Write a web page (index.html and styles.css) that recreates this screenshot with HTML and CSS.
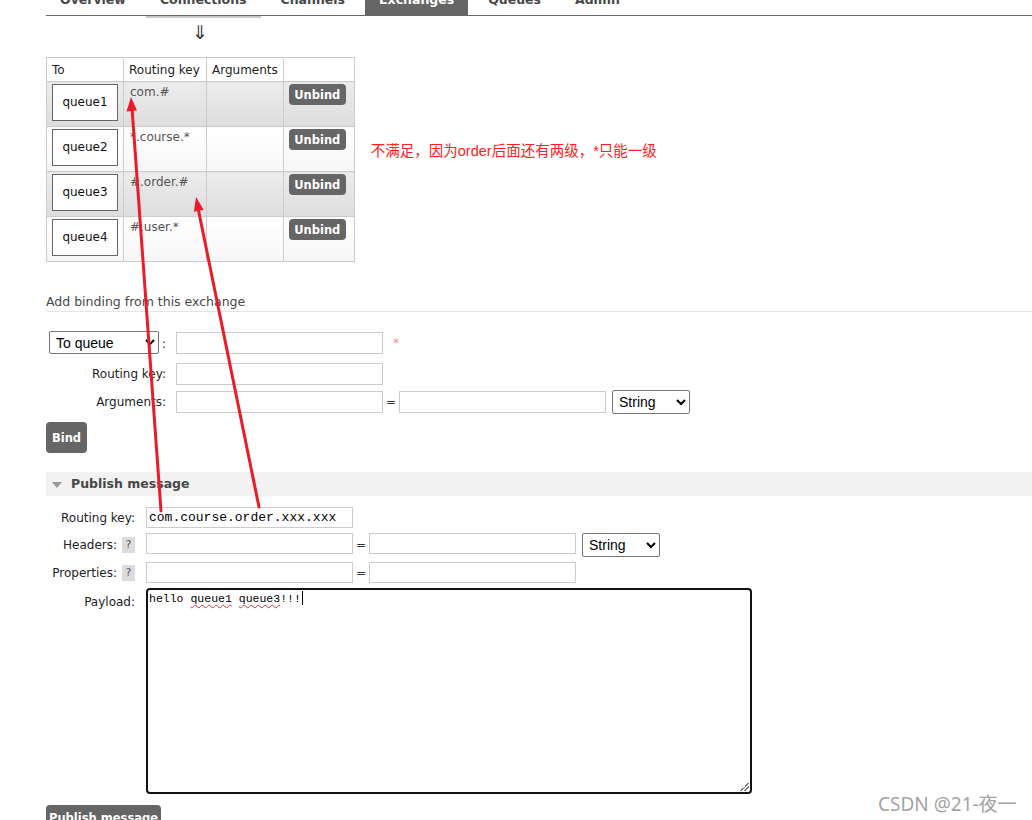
FILE: index.html
```html
<!DOCTYPE html>
<html lang="zh-CN">
<head>
<meta charset="utf-8">
<title>Exchange bindings</title>
<link rel="stylesheet" href="styles.css">
</head>
<body>
<div class="page">
  <nav class="tabs">
    <a class="tab">Overview</a>
    <a class="tab tab-hover">Connections</a>
    <a class="tab">Channels</a>
    <a class="tab tab-active">Exchanges</a>
    <a class="tab">Queues</a>
    <a class="tab">Admin</a>
  </nav>

  <div class="flow-arrow">⇓</div>

  <div class="bindings-row">
    <table class="bindings">
      <thead>
        <tr><th class="c-to">To</th><th class="c-key">Routing key</th><th class="c-args">Arguments</th><th class="c-act"></th></tr>
      </thead>
      <tbody>
        <tr class="alt1"><td><span class="qbox">queue1</span></td><td class="key">com.#</td><td></td><td class="act"><button class="btn btn-sm">Unbind</button></td></tr>
        <tr class="alt2"><td><span class="qbox">queue2</span></td><td class="key">*.course.*</td><td></td><td class="act"><button class="btn btn-sm">Unbind</button></td></tr>
        <tr class="alt1"><td><span class="qbox">queue3</span></td><td class="key">#.order.#</td><td></td><td class="act"><button class="btn btn-sm">Unbind</button></td></tr>
        <tr class="alt2"><td><span class="qbox">queue4</span></td><td class="key">#.user.*</td><td></td><td class="act"><button class="btn btn-sm">Unbind</button></td></tr>
      </tbody>
    </table>
    <p class="note">不满足，因为order后面还有两级，*只能一级</p>
  </div>

  <section class="add-binding">
    <h3 class="sub-head">Add binding from this exchange</h3>
    <div class="bind-form">
      <div class="frow r1">
        <label class="flabel"><select class="sel sel-dest"><option>To queue</option></select><span class="colon">:</span></label>
        <input class="inp" type="text">
        <span class="req">*</span>
      </div>
      <div class="frow r2">
        <label class="flabel">Routing key:</label>
        <input class="inp" type="text">
      </div>
      <div class="frow r3">
        <label class="flabel">Arguments:</label>
        <input class="inp" type="text">
        <span class="eq">=</span>
        <input class="inp" type="text">
        <select class="sel sel-type"><option>String</option></select>
      </div>
    </div>
    <button class="btn btn-bind">Bind</button>
  </section>

  <section class="publish">
    <h2 class="section-head"><span class="tri"></span>Publish message</h2>
    <div class="pub-form">
      <div class="prow">
        <label class="plabel">Routing key:</label>
        <input class="inp inp-pub mono" type="text" value="com.course.order.xxx.xxx">
      </div>
      <div class="prow">
        <label class="plabel">Headers: <span class="help">?</span></label>
        <input class="inp inp-pub" type="text">
        <span class="eq">=</span>
        <input class="inp inp-pub" type="text">
        <select class="sel sel-type"><option>String</option></select>
      </div>
      <div class="prow">
        <label class="plabel">Properties: <span class="help">?</span></label>
        <input class="inp inp-pub" type="text">
        <span class="eq">=</span>
        <input class="inp inp-pub" type="text">
      </div>
      <div class="prow prow-top">
        <label class="plabel plabel-top">Payload:</label>
        <div class="payload">hello <span class="typo">queue1</span> <span class="typo">queue3</span>!!!<span class="caret"></span></div>
      </div>
    </div>
    <button class="btn btn-publish">Publish message</button>
  </section>
</div>

<svg class="annotations" width="1032" height="820" viewBox="0 0 1032 820">
  <line x1="161" y1="511" x2="132" y2="108" />
  <polygon points="131,97 137,110.6 126.5,111.4" />
  <line x1="259" y1="507" x2="198" y2="208" />
  <polygon points="196,197 203.7,209.7 193.9,211.7" />
</svg>

<div class="watermark">CSDN @21-夜一</div>
</body>
</html>
```

FILE: styles.css
```css
html, body {
  margin: 0;
  padding: 0;
  overflow: hidden;
  background: #fff;
}

body {
  font-family: "DejaVu Sans", Verdana, sans-serif;
  font-size: 12px;
  color: #222;
  width: 1032px;
  height: 820px;
  position: relative;
}

.page {
  padding-left: 46px;
}

/* ---------- tabs ---------- */
.tabs {
  display: flex;
  margin-top: -16px;
  border-bottom: 1px solid #666;
  height: 31px;
}

.tab {
  display: block;
  padding: 0 14px;
  margin-right: 6px;
  line-height: 31px;
  font-weight: bold;
  font-size: 12.5px;
  color: #484848;
  position: relative;
}

.tab-hover::after {
  content: "";
  position: absolute;
  left: 0;
  right: 0;
  bottom: -3px;
  height: 2px;
  background: #c8c8c8;
}

.tab-active {
  background: #666;
  color: #fff;
}

.flow-arrow {
  height: 41px;
  padding-left: 146px;
  font-size: 19px;
  line-height: 32px;
  color: #333;
  box-sizing: border-box;
}

/* ---------- bindings table ---------- */
.bindings-row {
  display: flex;
  align-items: flex-start;
}

.bindings {
  border-collapse: collapse;
  border: 1px solid #ccc;
}

.bindings th,
.bindings td {
  border: 1px solid #ccc;
  padding: 0;
}

.bindings th {
  height: 23px;
  text-align: left;
  font-weight: normal;
  padding: 0 5px;
  color: #222;
  background: #fff;
}

.c-to { width: 66px; }
.c-key { width: 72px; }
.c-args { width: 65px; }
.c-act { width: 60px; }

.bindings td {
  height: 42px;
  vertical-align: top;
}

.alt1 td {
  background: linear-gradient(#ececec, #dddddd);
}

.alt2 td {
  background: linear-gradient(#ffffff, #f6f6f6);
}

.bindings td:first-child {
  padding: 2px 4px 0 5px;
}

.qbox {
  display: block;
  width: 64px;
  height: 35px;
  border: 1px solid #666;
  background: #fff;
  text-align: center;
  line-height: 35px;
  color: #111;
}

.key {
  padding: 2px 6px 0 6px !important;
  color: #555;
  line-height: 16px;
}

.act {
  padding: 2px 0 0 5px !important;
}

.btn {
  border: 0;
  background: #666;
  color: #fff;
  font-family: "DejaVu Sans", Verdana, sans-serif;
  font-weight: bold;
  font-size: 11.5px;
  border-radius: 4px;
  cursor: pointer;
}

.btn-sm {
  width: 57px;
  height: 21px;
  padding: 0;
}

.note {
  margin: 82px 0 0 16px;
  font-family: "Liberation Sans", "Noto Sans CJK SC", sans-serif;
  font-size: 14.5px;
  color: #ff2020;
}

/* ---------- add binding ---------- */
.add-binding {
  margin-top: 31px;
}

.sub-head {
  margin: 0;
  font-weight: normal;
  font-size: 12.5px;
  color: #484848;
  padding-bottom: 1px;
  border-bottom: 1px solid #e4e4e4;
  line-height: 17px;
}

.bind-form {
  margin-top: 19px;
}

.frow {
  display: flex;
  align-items: center;
}

.r1 { margin-bottom: 9px; }
.r2 { margin-bottom: 5px; }

.flabel {
  width: 120px;
  text-align: right;
  margin-right: 10px;
  color: #222;
  white-space: nowrap;
}

.colon {
  margin-left: 3px;
}

.inp {
  box-sizing: border-box;
  width: 207px;
  height: 22px;
  border: 1px solid #ccc;
  border-radius: 0;
  padding: 1px 2px;
  margin: 0;
  font-family: "Liberation Sans", sans-serif;
  font-size: 13px;
  outline: none;
}

.inp-pub {
  height: 21px;
}

.mono {
  font-family: "Liberation Mono", "Courier New", monospace;
  font-size: 13px;
  color: #000;
}

.sel {
  box-sizing: border-box;
  height: 23px;
  border: 1px solid #767676;
  border-radius: 2px;
  background: #fff;
  font-family: "Liberation Sans", Arial, sans-serif;
  font-size: 14px;
  color: #000;
  padding: 0 2px;
  margin: 0;
}

.sel-dest {
  width: 110px;
}

.sel-type {
  width: 78px;
  height: 24px;
  margin-left: 6px;
}

.req {
  color: #f58a8a;
  margin-left: 10px;
  font-size: 12px;
}

.eq {
  width: 16px;
  text-align: center;
  color: #333;
}

.btn-bind {
  margin-top: 8px;
  width: 41px;
  height: 31px;
  padding: 0;
  display: block;
}

/* ---------- publish ---------- */
.publish {
  margin-top: 19px;
}

.section-head {
  margin: 0;
  height: 24px;
  line-height: 24px;
  background: #f2f2f2;
  font-size: 12.5px;
  font-weight: bold;
  color: #484848;
  display: flex;
  align-items: center;
}

.tri {
  width: 0;
  height: 0;
  border-left: 5px solid transparent;
  border-right: 5px solid transparent;
  border-top: 6px solid #999;
  margin: 1px 9px 0 6px;
}

.pub-form {
  margin-top: 11px;
  display: flex;
  flex-direction: column;
  gap: 5px;
}

.prow {
  display: flex;
  align-items: flex-start;
}

.prow > .plabel,
.prow > .eq {
  align-self: center;
}

.prow-top {
  margin-top: 0;
}

.prow-top > .plabel {
  align-self: flex-start;
}

.plabel {
  width: 89px;
  text-align: right;
  margin-right: 11px;
  white-space: nowrap;
  display: flex;
  justify-content: flex-end;
  align-items: center;
  gap: 5px;
}

.plabel-top {
  padding-top: 7px;
}

.help {
  display: inline-block;
  width: 13px;
  height: 16px;
  line-height: 16px;
  text-align: center;
  background: #dcdcdc;
  color: #555;
  font-size: 11px;
}

.payload {
  position: relative;
  box-sizing: border-box;
  width: 606px;
  height: 206px;
  border: 2px solid #111;
  border-radius: 4px;
  padding: 1px 1px;
  font-family: "Liberation Mono", "Courier New", monospace;
  font-size: 11.5px;
  line-height: 15px;
  color: #000;
  white-space: pre;
}

.payload::after {
  content: "";
  position: absolute;
  right: 1px;
  bottom: 1px;
  width: 9px;
  height: 9px;
  background: linear-gradient(135deg, transparent 50%, #777 50%, #777 58%, transparent 58%, transparent 72%, #777 72%, #777 80%, transparent 80%);
}

.typo {
  text-decoration: underline wavy #e53030;
  text-decoration-thickness: 1px;
  text-underline-offset: 2px;
}

.caret {
  display: inline-block;
  width: 1px;
  height: 14px;
  background: #000;
  vertical-align: -3px;
  margin-left: 1px;
}

.btn-publish {
  margin-top: 11px;
  width: 115px;
  height: 30px;
  padding: 0 0 4px;
  display: block;
}

/* ---------- overlays ---------- */
.annotations {
  position: absolute;
  left: 0;
  top: 0;
  pointer-events: none;
}

.annotations line {
  stroke: #ea1c27;
  stroke-width: 3;
  stroke-linecap: round;
}

.annotations polygon {
  fill: #ea1c27;
}

.watermark {
  position: absolute;
  left: 878px;
  top: 789px;
  font-family: "Noto Sans", "Noto Sans CJK SC", sans-serif;
  font-size: 19px;
  color: #a3a3a3;
  white-space: nowrap;
}
```
